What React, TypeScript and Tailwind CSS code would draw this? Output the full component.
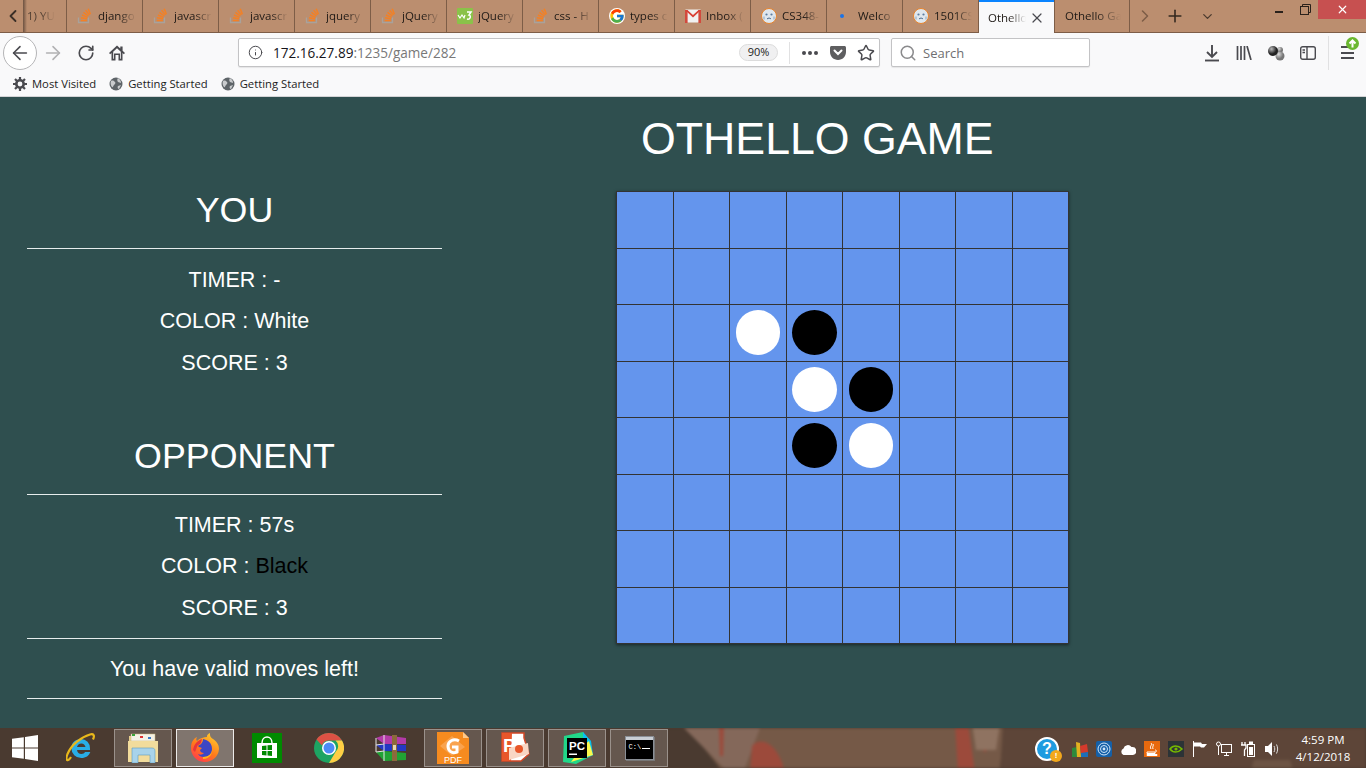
import React from "react";
import { ArrowLeft, ArrowRight, RotateCw, Info, Search, Star, X, Plus, ChevronDown, ChevronLeft, ChevronRight } from "lucide-react";
import { FcGoogle } from "react-icons/fc";

const SO = () => (
  <svg width="16" height="16" viewBox="0 0 16 16" fill="none">
    <path d="M1.500 9.500v5h10v-5" stroke="#a8a29c" strokeWidth="1.300" />
    <g stroke="#f48024" strokeWidth="1.500">
      <path d="M3.800 12.500h6" /><path d="M4 9.800l6 1" /><path d="M5 7l5.500 2.400" /><path d="M6.500 4.400l4.800 3.500" /><path d="M8.600 2.200l3.800 4.700" /><path d="M11.200 .8l2.200 5.400" />
    </g>
  </svg>
);
const W3 = () => (
  <svg width="16" height="16" viewBox="0 0 16 16"><rect width="16" height="16" rx="1" fill="#8ac249" /><path d="M1 7l2 3 2-3 2 3 1-3" stroke="#fff" strokeWidth="1.200" fill="none" /><path d="M10 4h4l-2 3c2 0 2 5-2 4" stroke="#fff" strokeWidth="1.500" fill="none" /></svg>
);
const Gmail = () => (
  <svg width="16" height="14" viewBox="0 0 16 14"><rect x="0.500" y="0.500" width="15" height="13" fill="#f1f1f1" /><path d="M0 1h2.600v13H0zM13.400 1H16v13h-2.600z" fill="#d24a3d" /><path d="M0 1h2.400L8 6l5.600-5H16L8 8.600z" fill="#d93f33" /></svg>
);
const Face = ({ s = 16 }: { s?: number }) => (
  <svg width={s} height={s} viewBox="0 0 16 16"><circle cx="8" cy="8" r="7.500" fill="#dfe7ee" stroke="#e8842c" /><circle cx="5.500" cy="6.500" r="1.100" fill="#5b7da0" /><circle cx="10.500" cy="6.500" r="1.100" fill="#5b7da0" /><path d="M6 11c1.200-1.200 3-1.200 4 0" stroke="#4b6b8d" fill="none" /><path d="M3 8.500v3M13 8.500v3" stroke="#8ba7bf" /></svg>
);
const Dot = () => (
  <svg width="16" height="16" viewBox="0 0 16 16"><circle cx="5" cy="8" r="2" fill="#1a73e8" /></svg>
);

const tabs: { t: string; i: React.ReactNode; pad?: string }[] = [
  { t: "django", i: <SO /> },
  { t: "javascript", i: <SO /> },
  { t: "javascript", i: <SO /> },
  { t: "jquery", i: <SO /> },
  { t: "jQuery", i: <SO /> },
  { t: "jQuery", i: <W3 /> },
  { t: "css - H", i: <SO /> },
  { t: "types c", i: <FcGoogle size={16} className="rounded-full bg-white" /> },
  { t: "Inbox (", i: <Gmail /> },
  { t: "CS348-", i: <Face /> },
  { t: "Welco", i: <Dot /> },
  { t: "1501CS", i: <Face /> },
];

const Tab = ({ t, i }: { t: string; i: React.ReactNode }) => (
  <div className="w-[76px] h-full flex items-center gap-[5px] pl-[10px] border-r border-[#7d5d47] shrink-0">
    <span className="w-[16px] flex justify-center shrink-0">{i}</span>
    <span className="w-[38px] overflow-hidden whitespace-nowrap [mask-image:linear-gradient(to_right,black_55%,transparent)]">{t}</span>
  </div>
);

const TabBar = () => (
  <div className="h-[33px] bg-[#bb8e6f] border-b border-[#7d5d47] flex text-[11.500px] text-[#1f1a16] shrink-0">
    <div className="w-[67px] shrink-0 flex items-center border-r border-[#7d5d47]">
      <ChevronLeft size={20} strokeWidth={2.200} className="text-[#3b2f27] ml-[3px] w-[20px]" />
      <span className="w-[4px] h-full bg-gradient-to-r from-[#6d5241] to-[#bb8e6f]" />
      <span className="overflow-hidden whitespace-nowrap w-[28px] opacity-70 [mask-image:linear-gradient(to_right,black_50%,transparent)]">1) YUI</span>
    </div>
    {tabs.map((x, k) => <Tab key={k} t={x.t} i={x.i} />)}
    <div className="w-[75px] shrink-0 bg-[#f9f9fa] border-t-2 border-[#0a84ff] -mb-px flex items-center pl-[9px]">
      <span className="w-[38px] overflow-hidden whitespace-nowrap [mask-image:linear-gradient(to_right,black_55%,transparent)]">Othello</span>
      <X size={16} strokeWidth={1.800} className="text-[#4a4a4f] ml-[3px]" />
    </div>
    <div className="w-[76px] shrink-0 flex items-center pl-[10px] border-r border-[#7d5d47] border-l">
      <span className="w-[56px] overflow-hidden whitespace-nowrap [mask-image:linear-gradient(to_right,black_55%,transparent)]">Othello Ga</span>
    </div>
    <ChevronRight size={20} strokeWidth={1.800} className="text-[#7d5d47] ml-[5px] mt-[6px]" />
    <Plus size={20} strokeWidth={1.900} className="text-[#33281f] ml-[10px] mt-[6px]" />
    <ChevronDown size={15} strokeWidth={2} className="text-[#4a3a2e] ml-[15px] mt-[9px]" />
    <div className="flex-1" />
    <div className="flex h-[19px] items-start">
      <div className="w-[26px] h-[19px] flex items-center justify-center"><span className="w-[8px] h-[2px] bg-[#2a211b] mt-[4px]" /></div>
      <div className="w-[26px] h-[19px] flex items-center justify-center">
        <svg width="11" height="11" viewBox="0 0 11 11" fill="none" stroke="#2a211b"><rect x="0.500" y="2.500" width="8" height="8" /><path d="M2.500 2.500v-2h8v8h-2" /></svg>
      </div>
      <div className="w-[48px] h-[19px] bg-[#c75050] flex items-center justify-center"><X size={13} strokeWidth={2.200} className="text-white" /></div>
    </div>
  </div>
);

const Home = () => (
  <svg width="16" height="16" viewBox="0 0 16 16" fill="#4a4a4f"><path d="M8 .6L0 8l1.200 1.200L2.500 8v7.400h4V10h3v5.400h4V8l1.300 1.200L16 8l-2.400-2.200V1.600h-2.300v2L8 .6zM4.200 6.800L8 3.200l3.800 3.600v7H11V8.500H5v5.300h-.8z" /></svg>
);
const Pocket = () => (
  <svg width="16" height="16" viewBox="0 0 16 16"><path d="M1.600 1h12.800c.9 0 1.600.7 1.600 1.600V7c0 4.400-3.600 8-8 8S0 11.400 0 7V2.600C0 1.700.7 1 1.600 1z" fill="#5e5e60" /><path d="M4.500 5.500L8 9l3.500-3.500" stroke="#fff" strokeWidth="2" fill="none" strokeLinecap="round" /></svg>
);
const Library = () => (
  <svg width="16" height="14" viewBox="0 0 16 14" stroke="#4a4a4f" strokeWidth="1.700" fill="none"><path d="M1.500 0v14M5 0v14M8.500 0v14M11 0l4 14" /></svg>
);
const Balls = () => (
  <svg width="18" height="18" viewBox="0 0 18 18"><defs><radialGradient id="bk" cx=".35" cy=".3"><stop offset="0" stopColor="#bbb" /><stop offset="1" stopColor="#222" /></radialGradient><radialGradient id="gr" cx=".35" cy=".3"><stop offset="0" stopColor="#ddd" /><stop offset="1" stopColor="#777" /></radialGradient></defs><circle cx="13" cy="6" r="3" fill="url(#gr)" /><circle cx="13" cy="12" r="4.500" fill="url(#gr)" /><circle cx="6" cy="7" r="5" fill="url(#bk)" /></svg>
);
const Sidebar = () => (
  <svg width="16" height="14" viewBox="0 0 16 14" fill="none" stroke="#4a4a4f" strokeWidth="1.400"><rect x="0.700" y="0.700" width="14.600" height="12.600" rx="2" /><path d="M7 1v12M2.500 4H5M2.500 6.500H5" /></svg>
);
const DownloadIcon = () => (
  <svg width="18" height="18" viewBox="0 0 18 18" fill="none" stroke="#4a4a4f" strokeWidth="1.900"><path d="M9 1v12M4 8l5 5 5-5" /><path d="M2 16.500h14" /></svg>
);
const Menu = () => (
  <div className="relative w-[13px] h-[13px] flex flex-col justify-between">
    <span className="h-[2px] w-[7px] bg-[#4a4a4f]" /><span className="h-[2px] w-[13px] bg-[#4a4a4f]" /><span className="h-[2px] w-[13px] bg-[#4a4a4f]" />
    <svg className="absolute left-[5px] -top-[9px]" width="13" height="13" viewBox="0 0 13 13"><circle cx="6.500" cy="6.500" r="6.500" fill="#6ab82f" /><path d="M6.500 10.500V3.500M3.500 6.500l3-3 3 3" stroke="#fff" strokeWidth="2" fill="none" /></svg>
  </div>
);

const NavBar = () => (
  <div className="h-[39px] bg-[#f9f9fa] flex items-center shrink-0 relative">
    <div className="ml-[3px] w-[34px] h-[34px] rounded-full border border-[#b5b5b7] bg-white flex items-center justify-center"><ArrowLeft size={22} strokeWidth={1.700} className="text-[#4a4a4f]" /></div>
    <ArrowRight size={22} strokeWidth={1.700} className="text-[#b1b1b3] ml-[5px]" />
    <RotateCw size={18} strokeWidth={2.200} className="text-[#4a4a4f] ml-[12.500px]" />
    <span className="ml-[14.500px]"><Home /></span>
    <div className="ml-[113px] w-[642px] h-[29px] bg-white border border-[#c3c3c5] rounded-[2px] shadow-[0_1px_1px_rgba(0,0,0,0.08)] flex items-center text-[13.550px]">
      <Info size={15} strokeWidth={1.600} className="text-[#4a4a4f] ml-[9px]" />
      <span className="ml-[10px] pt-[2px] text-[#15141a]">172.16.27.89<span className="text-[#787878]">:1235/game/282</span></span>
      <div className="flex-1" />
      <span className="w-[39px] h-[17px] rounded-full bg-[#f0f0f1] border border-[#dcdcdc] text-[11px] text-[#222] flex items-center justify-center">90%</span>
      <span className="w-px h-[22px] bg-[#e1e1e2] ml-[11px]" />
      <span className="ml-[12px] flex gap-[2px] w-[16px]"><i className="w-[4px] h-[4px] rounded-full bg-[#4a4a4f]" /><i className="w-[4px] h-[4px] rounded-full bg-[#4a4a4f]" /><i className="w-[4px] h-[4px] rounded-full bg-[#4a4a4f]" /></span>
      <span className="ml-[12px]"><Pocket /></span>
      <Star size={18} strokeWidth={2} className="text-[#4a4a4f] ml-[11px] mr-[4px]" />
    </div>
    <div className="ml-[11px] w-[199px] h-[29px] bg-white border border-[#c3c3c5] rounded-[2px] shadow-[0_1px_1px_rgba(0,0,0,0.08)] flex items-center text-[13px] text-[#6f6f72]">
      <Search size={18} strokeWidth={2} className="text-[#8a8a8c] ml-[7px]" />
      <span className="ml-[6px] pt-[3px]">Search</span>
    </div>
    <span className="ml-[113px]"><DownloadIcon /></span>
    <span className="ml-[15px]"><Library /></span>
    <span className="ml-[15px]"><Balls /></span>
    <span className="ml-[15px]"><Sidebar /></span>
    <span className="w-px h-[34px] bg-[#e1e1e2] ml-[12px]" />
    <span className="ml-[12px]"><Menu /></span>
  </div>
);

const Gear = () => (
  <svg width="14" height="14" viewBox="0 0 14 14"><circle cx="7" cy="7" r="3.700" fill="none" stroke="#4a4a4f" strokeWidth="2.600" /><g stroke="#4a4a4f" strokeWidth="2.200"><path d="M7 0v3M7 11v3M0 7h3M11 7h3M2 2l2 2M10 10l2 2M2 12l2-2M10 4l2-2" /></g></svg>
);
const Globe = () => (
  <svg width="14" height="14" viewBox="0 0 14 14"><circle cx="7" cy="7" r="6.500" fill="#5e6468" /><path d="M2 4c2-1 3 0 4 1s0 2-1 3-1 3-2 2-2-4-1-6zM9 1c2 1 3 3 3 5l-3-1c-1-1-1-3 0-4zM9 9l3-1-2 4c-1 0-2-2-1-3z" fill="#c9cbcd" /></svg>
);

const Bookmarks = () => (
  <div className="h-[25px] bg-[#f9f9fa] border-b border-[#d4d4d6] flex items-center text-[11.250px] text-[#1c1c1c] shrink-0 pl-[13px]">
    <Gear /><span className="ml-[5px]">Most Visited</span>
    <span className="ml-[13px]"><Globe /></span><span className="ml-[5px]">Getting Started</span>
    <span className="ml-[13px]"><Globe /></span><span className="ml-[5px]">Getting Started</span>
  </div>
);

const board: Record<string, string> = { "2-2": "w", "2-3": "b", "3-3": "w", "3-4": "b", "4-3": "b", "4-4": "w" };

const Board = () => (
  <div className="w-[453px] h-[453px] bg-[#333] grid grid-cols-8 grid-rows-8 gap-px p-px shadow-[0_1px_3px_rgba(0,0,0,0.5)]">
    {Array.from({ length: 64 }, (_, k) => {
      const key = `${Math.floor(k / 8)}-${k % 8}`;
      const v = board[key];
      return (
        <div key={k} className="bg-[#6495ed] flex items-center justify-center">
          {v && <span className={`w-[44.500px] h-[45px] rounded-full ${v === "w" ? "bg-white" : "bg-black"}`} />}
        </div>
      );
    })}
  </div>
);

const Row = ({ children }: { children: React.ReactNode }) => (
  <div className="h-[41.500px] flex items-center justify-center text-[21.500px]">{children}</div>
);
const Rule = () => <div className="h-px bg-[#e6ecec]" />;

const Main = () => (
  <div className="flex-1 bg-[#2f4f4f] flex text-white font-['Liberation_Sans',Arial,sans-serif]">
    <div className="w-[415px] ml-[27px] shrink-0 pt-[89px] flex flex-col">
      <div className="h-[50px] flex items-center justify-center text-[35.800px]">YOU</div>
      <div className="mt-[12px]"><Rule /></div>
      <div className="mt-[10px]">
        <Row>TIMER : -</Row>
        <Row>COLOR : White</Row>
        <Row>SCORE : 3</Row>
      </div>
      <div className="h-[50px] mt-[48.500px] flex items-center justify-center text-[35.800px]">OPPONENT</div>
      <div className="mt-[11.500px]"><Rule /></div>
      <div className="mt-[9.500px]">
        <Row>TIMER : 57s</Row>
        <Row><span>COLOR : <span className="text-black">Black</span></span></Row>
        <Row>SCORE : 3</Row>
      </div>
      <div className="mt-[9.500px]"><Rule /></div>
      <div className="mt-[9px]"><Row>You have valid moves left!</Row></div>
      <div className="mt-[8.500px]"><Rule /></div>
    </div>
    <div className="ml-[174px] flex flex-col pt-[17px]">
      <div className="h-[50px] flex items-center ml-[25px] text-[44.700px] whitespace-nowrap">OTHELLO GAME</div>
      <div className="mt-[27px]"><Board /></div>
    </div>
  </div>
);

const WinLogo = () => (
  <svg width="26" height="26" viewBox="0 0 26 26" fill="#fff"><path d="M0 3.800L11.800 2.200V12.400H0zM13 2L26 0V12.400H13zM0 13.600H11.800V23.800L0 22.200zM13 13.600H26V26L13 24z" /></svg>
);
const IE = () => (
  <svg width="30" height="30" viewBox="0 0 30 30" fill="none"><path d="M15 6a9 9 0 0 1 9 9.500v1.500H11c.4 2.500 2 4 4.400 4 1.700 0 3-.8 3.700-2h5.200c-1.200 3.700-4.500 6-8.900 6a9.800 9.800 0 0 1-10-10C5.400 9.500 9.500 6 15 6zm-4 8h8.500c-.3-2-2-3.600-4.200-3.600S11.400 12 11 14z" fill="#29aee6" /><path d="M5 24C2 29 -1 28 1.500 21 5 12 15 4 24 1.500c3.500-1 5 .8 3 5" stroke="#e9b81b" strokeWidth="2.200" /></svg>
);
const Folder = () => (
  <svg width="32" height="30" viewBox="0 0 32 30"><path d="M2 3h10l2 2h14v24H2z" fill="#e7cf8d" /><rect x="4" y="1" width="24" height="7" fill="#f4f1e6" stroke="#c9b67d" strokeWidth=".5" /><rect x="5" y="1" width="3" height="2" fill="#3aa53a" /><rect x="13" y="3" width="3" height="2" fill="#d33" /><rect x="21" y="4" width="3" height="2" fill="#3a78c2" /><path d="M1 8h30v21H1z" fill="#f2dc9c" /><path d="M5 15h20c2 0 3 1 3 3v12h-5v-8H11v8H5z" fill="#a8d3ea" stroke="#5c9cc0" strokeWidth=".6" /></svg>
);
const Firefox = () => (
  <svg width="30" height="30" viewBox="0 0 30 30"><defs><linearGradient id="ffa" x1="0.800" y1="0" x2="0.200" y2="1"><stop offset="0" stopColor="#ffcf2e" /><stop offset=".55" stopColor="#ff7a1a" /><stop offset="1" stopColor="#ff3750" /></linearGradient></defs><path d="M20 0c-.5 3 1 5 3 6 3 2 6 5 6 10a14 14 0 1 1-28-2c0-4 2-8 6-10-1 2-1 3 0 4 3-3 7-4 10-4-.5-2 1-3 3-4z" fill="url(#ffa)" /><path d="M13 6c4 1 9 3 9 10 0 5-4 8-8 8-3 0-5-1-6-3 2 1 4 1 6-1-2 0-4-1-4-3l2-2c-2-.5-3-1-4-2 2-1 5-3 5-7z" fill="#3b46c4" /><path d="M3 17c1-6 4-9 9-11l-1 4c-2 2-4 2-4 4l-2 5z" fill="#e6353c" /><path d="M13 24c5 0 10-3 9-9 1 5-2 11-9 11z" fill="#ffb319" /></svg>
);
const Store = () => (
  <svg width="30" height="30" viewBox="0 0 30 30"><rect width="30" height="30" fill="#008a00" /><path d="M5 10h20v15H5z" fill="#fff" /><path d="M10 10c0-8 10-8 10 0" fill="none" stroke="#fff" strokeWidth="1.500" /><path d="M10 13l4.500-.6V17H10zM15.500 12.300L20 12v5h-4.500zM10 18h4.500v4.500L10 22zM15.500 18H20v5l-4.500-.5z" fill="#008a00" /></svg>
);
const Chrome = () => (
  <svg width="30" height="30" viewBox="0 0 30 30"><circle cx="15" cy="15" r="15" fill="#1da462" /><path d="M15 0a15 15 0 0 1 13 7.500H15a7.500 7.500 0 0 0-7 5L2.500 6.500A15 15 0 0 1 15 0z" fill="#dd5144" /><path d="M28 7.500A15 15 0 0 1 15 30l6.500-11a7.500 7.500 0 0 0 0-11.500z" fill="#ffce44" /><circle cx="15" cy="15" r="7" fill="#fff" /><circle cx="15" cy="15" r="5.500" fill="#4c8bf5" /></svg>
);
const Rar = () => (
  <svg width="32" height="28" viewBox="0 0 32 28"><path d="M1 4l8-3 22 3v6L9 10z" fill="#b33aa8" /><path d="M1 11l8-1 22 1v6H9z" fill="#2438c4" /><path d="M1 18l8-1 22 2v7L9 27z" fill="#21a334" /><path d="M1 4v14M9 1v26M1 11l8-1M1 18l8-1" stroke="#e5e5e5" /><rect x="17" y="1" width="5" height="26" fill="#8c6a3c" /><rect x="18" y="11" width="3" height="5" fill="#e3d8b5" /></svg>
);
const Foxit = () => (
  <svg width="32" height="32" viewBox="0 0 32 32"><path d="M0 0h26l6 6v26H0z" fill="#f68b1f" /><path d="M26 0l6 6h-6z" fill="#ffc98a" /><path d="M3 14L15 4l13 11-13 9z" fill="#f9a34f" /><path d="M22 9c-5-3-11 0-11 5s4 8 9 6v-5h-5" fill="none" stroke="#fff" strokeWidth="3" /><text x="16" y="31" textAnchor="middle" fontSize="9" fill="#fff" fontFamily="Liberation Sans">PDF</text></svg>
);
const PPT = () => (
  <svg width="30" height="32" viewBox="0 0 30 32"><path d="M2 1h22v5l5 16-8 7H2z" fill="#fff" stroke="#d24726" strokeWidth="1.500" /><path d="M2 1h10l-1 28H2z" fill="#e8562a" /><text x="3" y="20" fontSize="19" fontWeight="700" fill="#fff" fontFamily="Liberation Sans">P</text><path d="M9 16l19-5 1 11-20 6z" fill="#f9d6c4" /><circle cx="19" cy="17" r="4" fill="#e8562a" /></svg>
);
const PyCharm = () => (
  <svg width="32" height="32" viewBox="0 0 32 32"><path d="M3 4L22 0l6 9 4 14-17 9-13-2z" fill="#21d789" /><path d="M22 0l8 9 2 14-10 4z" fill="#07c3f2" /><path d="M10 30l22-7-4-14-6 5z" fill="#fcf84a" /><rect x="6" y="6" width="20" height="20" fill="#000" /><text x="8" y="18" fontSize="11.500" fontWeight="700" fill="#fff" fontFamily="Liberation Sans">PC</text><rect x="8" y="21.500" width="8" height="1.500" fill="#fff" /></svg>
);
const Cmd = () => (
  <div className="w-[29px] h-[24px] border border-[#8a8f96] bg-black flex flex-col shadow-[1px_1px_0_#777]">
    <span className="h-[3px] bg-[#c9ced4]" />
    <span className="text-[7px] leading-[9px] text-white font-['Liberation_Mono',monospace] pl-[3px] pt-[3px]">C:\<span className="ml-[1px] inline-block w-[8px] h-px bg-white" /></span>
  </div>
);

const TBtn = ({ children, hot }: { children: React.ReactNode; hot?: boolean }) => (
  <div className={`w-[58px] h-[38px] shrink-0 flex items-center justify-center border ${hot ? "bg-white/30 border-white/85" : "bg-white/15 border-white/35"}`}>{children}</div>
);
const TPlain = ({ children }: { children: React.ReactNode }) => (
  <div className="w-[58px] h-[38px] shrink-0 flex items-center justify-center">{children}</div>
);

const Help = () => (
  <div className="relative w-[24px] h-[24px] rounded-full bg-[#1e9be0] border-2 border-white flex items-center justify-center text-white text-[16px] font-bold font-['Liberation_Sans',sans-serif]">?
    <span className="absolute -right-[5px] -bottom-[3px] w-[12px] h-[12px] rounded-full bg-[#f3a81c] text-[8px] flex items-center justify-center">!</span>
  </div>
);
const Avg = () => (
  <svg width="16" height="16" viewBox="0 0 16 16"><path d="M0 7l5-1v10H0z" fill="#2d8a3c" /><path d="M4 1l4 1 1 14H5z" fill="#e2b11f" /><path d="M8 5l7-2 1 8-7 2z" fill="#d33a2c" /><path d="M9 12l7-1v5H9z" fill="#1c6fb8" /></svg>
);
const Sig = () => (
  <svg width="16" height="16" viewBox="0 0 16 16"><rect width="16" height="16" rx="2" fill="#1560a8" /><g fill="none" stroke="#cfe6fa" strokeWidth="1"><circle cx="8" cy="8" r="6" /><circle cx="8" cy="8" r="3.500" /></g><circle cx="8" cy="8" r="1.400" fill="#cfe6fa" /></svg>
);
const Cloud = () => (
  <svg width="16" height="11" viewBox="0 0 16 11" fill="#fff"><path d="M3.500 11a3.500 3.500 0 0 1 0-6.500A4.500 4.500 0 0 1 11.500 3a3.500 3.500 0 0 1 1.500 8z" /></svg>
);
const Java = () => (
  <svg width="16" height="16" viewBox="0 0 16 16"><rect width="16" height="16" fill="#e8690e" /><path d="M3 11h8v1.500H3zM3 13.500h10V14.500H3zM7 2c2 2-2 3 0 6M9 3c1 2-1 2 0 5" stroke="#fff" fill="none" /><path d="M11 9c2 0 2 2 0 2" stroke="#fff" fill="none" /></svg>
);
const Nvidia = () => (
  <svg width="16" height="16" viewBox="0 0 16 16"><rect width="16" height="16" fill="#2c3336" /><path d="M2 8c3-4 8-4 12 0-4 4-9 4-12 0z" fill="none" stroke="#76b900" strokeWidth="1.500" /><circle cx="8" cy="8" r="1.600" fill="#76b900" /></svg>
);
const Flag = () => (
  <svg width="16" height="16" viewBox="0 0 16 16"><path d="M1.500 0v16" stroke="#fff" /><path d="M2 1.500h7l1 1.500h5l-3 3.500H9l-1-1H2z" fill="#fff" /></svg>
);
const Net = () => (
  <svg width="16" height="16" viewBox="0 0 16 16" fill="none" stroke="#fff"><rect x="5.500" y="3.500" width="10" height="8" /><path d="M8 14.500h5M10.500 11.500v3" /><circle cx="2.500" cy="3" r="2" /><path d="M2.500 5v9" /></svg>
);
const Batt = () => (
  <svg width="16" height="16" viewBox="0 0 16 16" fill="none" stroke="#fff"><rect x="7.500" y="3.500" width="7" height="12" /><rect x="9.500" y="1" width="3" height="2" fill="#fff" /><rect x="9" y="6" width="4" height="8" fill="#fff" stroke="none" /><path d="M2 1v3M5 1v3M1 4h5v3l-1.500 2v6" strokeWidth="1.300" /></svg>
);
const Speaker = () => (
  <svg width="16" height="16" viewBox="0 0 16 16"><path d="M1 5h3l4-4v14l-4-4H1z" fill="#fff" /><path d="M10 5c1 2 1 4 0 6M12.500 3.500c1.500 3 1.500 6 0 9" stroke="#ddd" fill="none" /></svg>
);

const Taskbar = () => (
  <div className="relative h-[40px] bg-[#4a3a30] flex items-center shrink-0 overflow-hidden text-white">
    <svg className="absolute inset-0 blur-[1.500px]" width="1366" height="40" viewBox="0 0 1366 40" preserveAspectRatio="none">
      <path d="M668 0H1005L1000 40H710z" fill="#755947" />
      <path d="M1003 -5H1370V45H1000z" fill="#5d4538" />
      <path d="M660 -5H684L724 45H660z" fill="#4a3a30" />
      <path d="M684 0H760L745 40H724z" fill="#84685a" />
      <path d="M752 18C760 8 778 14 785 45H750z" fill="#9c4a3b" />
      <path d="M719 -5H724L723 28H720zM955 -5H968L975 45H958zM983 -5H987L986 24H984z" fill="#9c4a3b" />
      <path d="M972 -5H1000L996 22H976z" fill="#8f7361" />
      <path d="M1250 45L1254 32H1290L1294 45z" fill="#6d5444" />
    </svg>
    <div className="relative w-[50px] flex justify-center"><WinLogo /></div>
    <div className="relative flex gap-[4px] ml-[2px]">
      <TPlain><IE /></TPlain>
      <TBtn><Folder /></TBtn>
      <TBtn hot><Firefox /></TBtn>
      <TPlain><Store /></TPlain>
      <TPlain><Chrome /></TPlain>
      <TPlain><Rar /></TPlain>
      <TBtn><Foxit /></TBtn>
      <TBtn><PPT /></TBtn>
      <TBtn><PyCharm /></TBtn>
      <TBtn><Cmd /></TBtn>
    </div>
    <div className="relative ml-auto flex items-center h-full">
      <div className="flex items-center gap-[8px] mt-[2px]">
        <span className="mr-[5px]"><Help /></span>
        <Avg /><Sig /><Cloud /><Java /><Nvidia /><Flag /><Net /><Batt /><Speaker />
      </div>
      <div className="w-[86px] flex flex-col items-center text-[11.500px] leading-[17px] font-['Open_Sans',sans-serif]">
        <span>4:59 PM</span>
        <span>4/12/2018</span>
      </div>
    </div>
  </div>
);

export default function App() {
  return (
    <div className="w-[1366px] h-[768px] flex flex-col overflow-hidden font-['Open_Sans','Noto_Sans',sans-serif]">
      <TabBar />
      <NavBar />
      <Bookmarks />
      <Main />
      <Taskbar />
    </div>
  );
}
